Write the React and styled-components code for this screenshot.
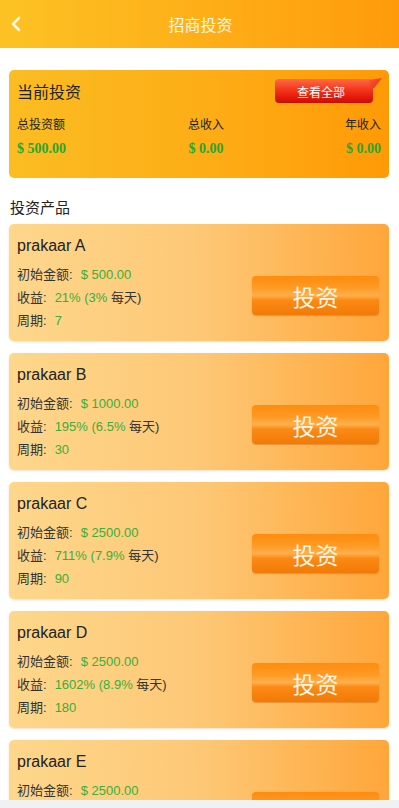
import React from "react";
import styled, { createGlobalStyle } from "styled-components";

const GlobalStyle = createGlobalStyle`
    html, body {
        margin: 0;
        padding: 0;
        background: #ffffff;
        font-family: "Liberation Sans", "Noto Sans CJK SC", sans-serif;
    }
`;

const products = [
    { name: "prakaar A", amount: "$ 500.00", rate: "21%", daily: "3%", days: 7 },
    { name: "prakaar B", amount: "$ 1000.00", rate: "195%", daily: "6.5%", days: 30 },
    { name: "prakaar C", amount: "$ 2500.00", rate: "711%", daily: "7.9%", days: 90 },
    { name: "prakaar D", amount: "$ 2500.00", rate: "1602%", daily: "8.9%", days: 180 },
    { name: "prakaar E", amount: "$ 2500.00", rate: "2400%", daily: "9.9%", days: 240 },
];

function App() {
    return (
        <Page>
            <GlobalStyle />
            <Header>
                <BackButton>
                    <svg width="12" height="16" viewBox="0 0 12 16">
                        <path
                            d="M9 2 L3 8 L9 14"
                            fill="none"
                            stroke="#fff8e0"
                            strokeWidth="2.6"
                            strokeLinecap="round"
                            strokeLinejoin="round"
                        />
                    </svg>
                </BackButton>
                <Title>招商投资</Title>
            </Header>

            <Content>
                <SummaryCard>
                    <SummaryTop>
                        <SummaryTitle>当前投资</SummaryTitle>
                        <RibbonButton>查看全部</RibbonButton>
                    </SummaryTop>
                    <StatsGrid>
                        <StatLabel align="left">总投资额</StatLabel>
                        <StatLabel align="center">总收入</StatLabel>
                        <StatLabel align="right">年收入</StatLabel>
                        <StatValue align="left">$ 500.00</StatValue>
                        <StatValue align="center">$ 0.00</StatValue>
                        <StatValue align="right">$ 0.00</StatValue>
                    </StatsGrid>
                </SummaryCard>

                <SectionTitle>投资产品</SectionTitle>

                <ProductList>
                    {products.map((p) => (
                        <ProductCard key={p.name}>
                            <ProductInfo>
                                <ProductName>{p.name}</ProductName>
                                <InfoRow>
                                    初始金额:<Green>{p.amount}</Green>
                                </InfoRow>
                                <InfoRow>
                                    收益:
                                    <Green>
                                        {p.rate} ({p.daily}
                                    </Green>
                                    &nbsp;每天)
                                </InfoRow>
                                <InfoRow>
                                    周期:<Green>{p.days}</Green>
                                </InfoRow>
                            </ProductInfo>
                            <InvestButton>投资</InvestButton>
                        </ProductCard>
                    ))}
                </ProductList>
            </Content>
            <BottomBar />
        </Page>
    );
}

const Page = styled.div`
    width: 399px;
    min-height: 808px;
    background: #fff;
`;

const Header = styled.div`
    height: 48px;
    background: linear-gradient(90deg, #fcc224 0%, #feaf18 50%, #ff9b0b 100%);
    display: flex;
    align-items: center;
    justify-content: center;
    position: relative;
`;

const BackButton = styled.div`
    position: absolute;
    left: 10px;
    top: 16px;
    width: 14px;
    height: 16px;
    display: flex;
    align-items: center;
`;

const Title = styled.div`
    color: #fff8ea;
    font-size: 16px;
    font-family: "Noto Sans CJK SC", sans-serif;
    margin-left: 2px;
`;

const Content = styled.div`
    padding: 22px 10px 0 9px;
`;

const SummaryCard = styled.div`
    height: 108px;
    box-sizing: border-box;
    border-radius: 5px;
    background: linear-gradient(90deg, #fbbd22 0%, #fdac15 55%, #ff9a06 100%);
    padding: 9px 8px 0 8px;
    font-family: "Noto Sans CJK SC", sans-serif;
`;

const SummaryTop = styled.div`
    display: flex;
    justify-content: space-between;
    align-items: center;
    height: 24px;
`;

const SummaryTitle = styled.div`
    font-size: 16px;
    color: #222;
`;

const RibbonButton = styled.div`
    position: relative;
    width: 98px;
    height: 24px;
    margin-right: 8px;
    border-radius: 4px;
    background: linear-gradient(180deg, #ff6a4a 0%, #f53b1e 40%, #e51a0c 75%, #c80e06 100%);
    color: #fff;
    font-size: 12px;
    display: flex;
    align-items: center;
    justify-content: center;
    padding-right: 6px;
    box-sizing: border-box;
    &::after {
        content: "";
        position: absolute;
        right: -9px;
        top: -1px;
        width: 13px;
        height: 10px;
        background: linear-gradient(135deg, #ff5a3a 0%, #e52a10 100%);
        clip-path: polygon(0 20%, 100% 0, 40% 100%, 0 100%);
    }
`;

const StatsGrid = styled.div`
    display: grid;
    grid-template-columns: 1fr 1fr 1fr;
    row-gap: 8px;
    margin-top: 13px;
`;

const StatLabel = styled.div`
    font-size: 12px;
    color: #222;
    line-height: 16px;
    text-align: ${(p) => p.align};
    ${(p) => (p.align === "center" ? "padding-left: 14px;" : "")}
`;

const StatValue = styled.div`
    font-family: "Liberation Serif", serif;
    font-weight: bold;
    font-size: 14px;
    line-height: 18px;
    color: #27a72e;
    text-align: ${(p) => p.align};
    ${(p) => (p.align === "center" ? "padding-left: 14px;" : "")}
`;

const SectionTitle = styled.div`
    font-family: "Noto Sans CJK SC", sans-serif;
    font-size: 15px;
    color: #222;
    margin: 18px 0 6px 1px;
    line-height: 22px;
`;

const ProductList = styled.div`
    display: flex;
    flex-direction: column;
    gap: 12px;
`;

const ProductCard = styled.div`
    height: 117px;
    box-sizing: border-box;
    border-radius: 5px;
    background: linear-gradient(90deg, #fdd78c 0%, #fdc876 50%, #ffa63a 100%);
    box-shadow: 0 1px 2px rgba(200, 140, 40, 0.25);
    display: flex;
    justify-content: space-between;
    align-items: flex-end;
    padding: 12px 10px 26px 8px;
`;

const ProductInfo = styled.div`
    align-self: flex-start;
    display: flex;
    flex-direction: column;
`;

const ProductName = styled.div`
    font-size: 16px;
    color: #222;
    line-height: 20px;
    margin-bottom: 7px;
`;

const InfoRow = styled.div`
    font-family: "Liberation Sans", "Noto Sans CJK SC", sans-serif;
    font-size: 13px;
    color: #333;
    line-height: 23px;
    white-space: nowrap;
`;

const Green = styled.span`
    color: #3aae3a;
    margin-left: 8px;
`;

const InvestButton = styled.div`
    width: 127px;
    height: 39px;
    border-radius: 4px;
    background: linear-gradient(
        180deg,
        #ff8c0e 0%,
        #ff9a24 30%,
        #ffb04c 50%,
        #fb8a14 62%,
        #f27a06 100%
    );
    box-shadow: 0 1px 1px rgba(180, 80, 0, 0.35);
    color: #fff6e6;
    font-family: "Noto Sans CJK SC", sans-serif;
    font-size: 23px;
    display: flex;
    align-items: center;
    justify-content: center;
    flex-shrink: 0;
`;

const BottomBar = styled.div`
    position: fixed;
    left: 0;
    right: 0;
    bottom: 0;
    height: 8px;
    background: #eff1f3;
`;

export default App;
